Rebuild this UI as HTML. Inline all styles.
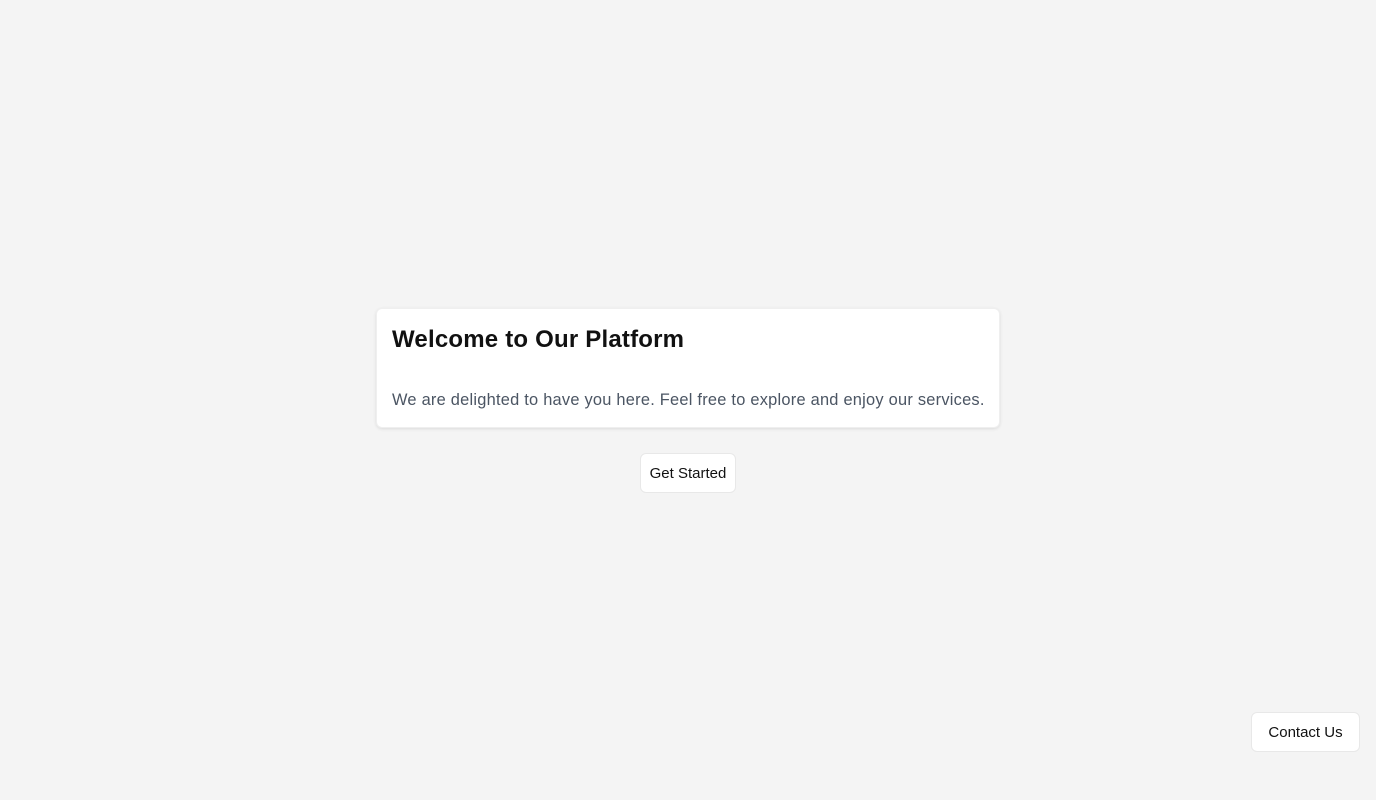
<!DOCTYPE html>
<html><head><style>
html,body{margin:0;padding:0;background:#f4f4f4;width:1376px;height:800px;overflow:hidden;font-family:"Liberation Sans",Arial,sans-serif;}
.card{position:absolute;left:376px;top:308px;width:624px;height:120px;box-sizing:border-box;background:#fff;border-radius:6px;box-shadow:0 1px 3px rgba(0,0,0,0.10);border:1px solid #efefef;}
h1{position:absolute;left:15px;top:17px;margin:0;font-size:24px;font-weight:bold;color:#111;letter-spacing:0.2px;white-space:nowrap;}
p{position:absolute;left:15px;top:82px;margin:0;font-size:16.4px;color:#4b5563;white-space:nowrap;letter-spacing:0.24px;}
.btn{position:absolute;box-sizing:border-box;background:#fff;border:1px solid #e8e8e8;border-radius:6px;font-size:15px;color:#111;display:flex;align-items:center;justify-content:center;white-space:nowrap;}
</style></head><body>
<div class="card"><h1>Welcome to Our Platform</h1><p>We are delighted to have you here. Feel free to explore and enjoy our services.</p></div>
<div class="btn" style="left:640px;top:453px;width:96px;height:40px;">Get Started</div>
<div class="btn" style="left:1251px;top:712px;width:109px;height:40px;">Contact Us</div>
</body></html>
